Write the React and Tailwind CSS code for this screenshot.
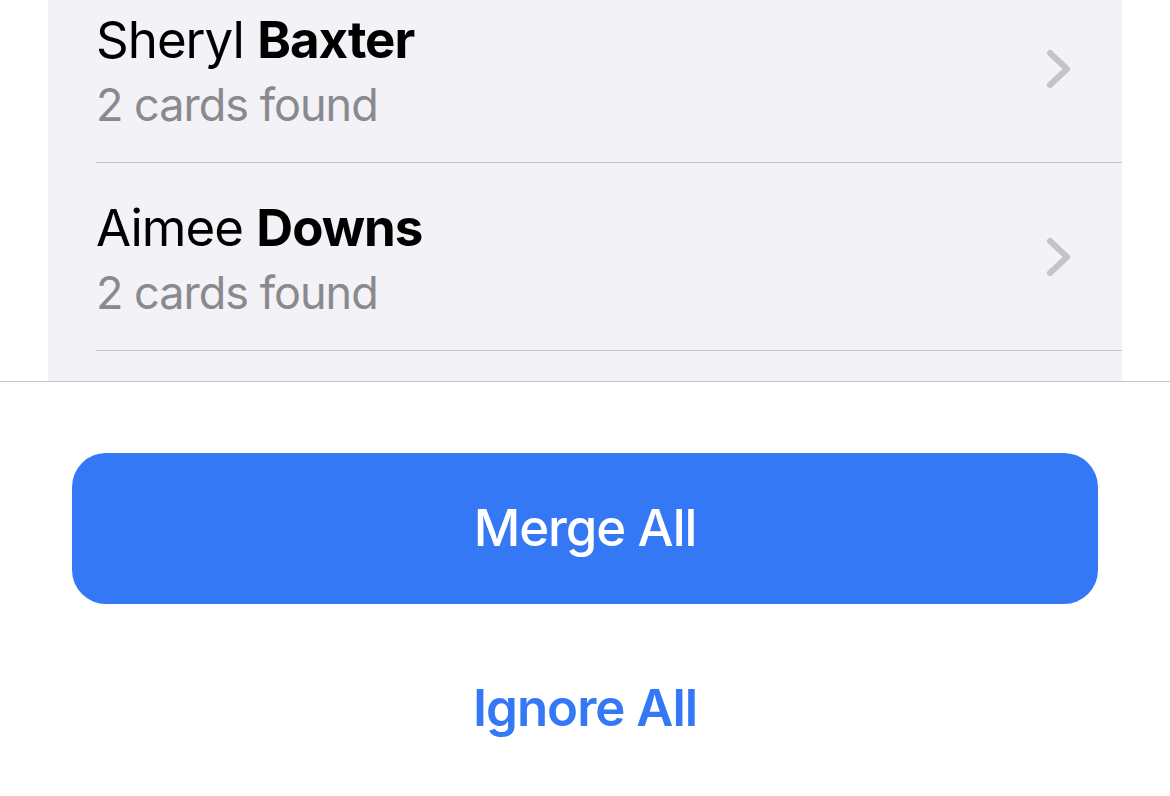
import React from 'react';

const people = [
    { first: 'Sheryl', last: 'Baxter', count: 2 },
    { first: 'Aimee', last: 'Downs', count: 2 },
];

function Chevron() {
    return (
        <svg width="26" height="40" viewBox="0 0 26 40" fill="none" className="shrink-0">
            <path d="M4 4 L21 20 L4 36" stroke="#c4c4c7" strokeWidth="6" strokeLinecap="round" strokeLinejoin="round" />
        </svg>
    );
}

export default function App() {
    return (
        <div className="w-[1170px] h-[796px] bg-white overflow-hidden" style={{ fontFamily: 'Inter, "Noto Sans", sans-serif' }}>
            <div className="mx-[48px] h-[381px] bg-[#f2f2f7] overflow-hidden">
                <div className="-mt-[25px]">
                    {people.map(p => (
                        <div key={p.last} className="pl-[48px]">
                            <div className="h-[188px] flex items-start justify-between border-b border-[#c6c6c8]">
                                <div className="pt-[34px]">
                                    <div className="text-[51px] leading-[61px] text-black tracking-[-1px]">
                                        {p.first} <span className="font-bold">{p.last}</span>
                                    </div>
                                    <div className="mt-[8px] text-[45px] leading-[54px] text-[#8a8a8e] tracking-[-1px]">
                                        {p.count} cards found
                                    </div>
                                </div>
                                <div className="h-full flex items-center pr-[50px]">
                                    <Chevron />
                                </div>
                            </div>
                        </div>
                    ))}
                </div>
            </div>
            <div className="border-t border-[#c6c6c8]">
                <div className="px-[72px] pt-[71px]">
                    <button className="w-full h-[151px] rounded-[34px] bg-[#3478f6] text-white text-[51px] font-medium tracking-[-1.1px]">
                        Merge All
                    </button>
                    <button className="w-full h-[110px] mt-[49px] text-[#3478f6] text-[51px] font-semibold tracking-[-1px]">
                        Ignore All
                    </button>
                </div>
            </div>
        </div>
    );
}
